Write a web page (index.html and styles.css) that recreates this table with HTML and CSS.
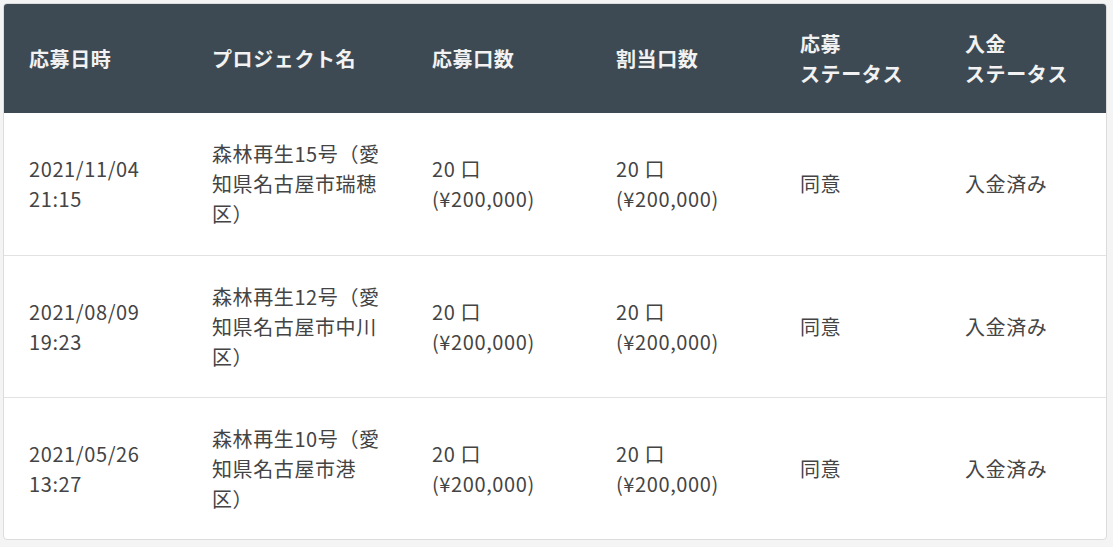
FILE: index.html
```html
<!DOCTYPE html>
<html lang="ja">
<head>
<meta charset="utf-8">
<link rel="stylesheet" href="styles.css">
</head>
<body>
<div class="card">
<table class="apps">
<colgroup>
<col class="c1"><col class="c2"><col class="c3"><col class="c4"><col class="c5"><col class="c6">
</colgroup>
<thead>
<tr>
<th>応募日時</th>
<th>プロジェクト名</th>
<th>応募口数</th>
<th>割当口数</th>
<th>応募<br>ステータス</th>
<th>入金<br>ステータス</th>
</tr>
</thead>
<tbody>
<tr>
<td>2021/11/04<br>21:15</td>
<td>森林再生15号（愛知県名古屋市瑞穂区）</td>
<td>20 口<br>(¥200,000)</td>
<td>20 口<br>(¥200,000)</td>
<td>同意</td>
<td>入金済み</td>
</tr>
<tr>
<td>2021/08/09<br>19:23</td>
<td>森林再生12号（愛知県名古屋市中川区）</td>
<td>20 口<br>(¥200,000)</td>
<td>20 口<br>(¥200,000)</td>
<td>同意</td>
<td>入金済み</td>
</tr>
<tr>
<td>2021/05/26<br>13:27</td>
<td>森林再生10号（愛知県名古屋市港区）</td>
<td>20 口<br>(¥200,000)</td>
<td>20 口<br>(¥200,000)</td>
<td>同意</td>
<td>入金済み</td>
</tr>
</tbody>
</table>
</div>
</body>
</html>
```
FILE: styles.css
```css
html, body {
  margin: 0;
  padding: 0;
}
body {
  background: #f4f4f4;
  padding: 3px;
  font-family: "Noto Sans CJK JP", "Noto Sans", sans-serif;
}
.card {
  width: 1102px;
  border: 1px solid #dcdcdc;
  border-radius: 4px;
  background: #fff;
  overflow: hidden;
}
.apps {
  width: 1102px;
  table-layout: fixed;
  border-collapse: collapse;
  font-size: 20px;
  letter-spacing: 0.6px;
  line-height: 30px;
}
.c1 { width: 183px; }
.c2 { width: 220px; }
.c3 { width: 184px; }
.c4 { width: 184px; }
.c5 { width: 165px; }
.c6 { width: 166px; }
.apps th {
  background: #3d4a53;
  color: #f2f2f2;
  font-weight: 700;
  text-align: left;
  vertical-align: middle;
  padding: 0 25px;
  height: 109px;
}
.apps td {
  color: #444;
  text-align: left;
  vertical-align: middle;
  padding: 0 25px;
  height: 141px;
  border-top: 1px solid #e2e2e2;
}
.apps tbody tr:first-child td {
  border-top: none;
  height: 142px;
}
```
